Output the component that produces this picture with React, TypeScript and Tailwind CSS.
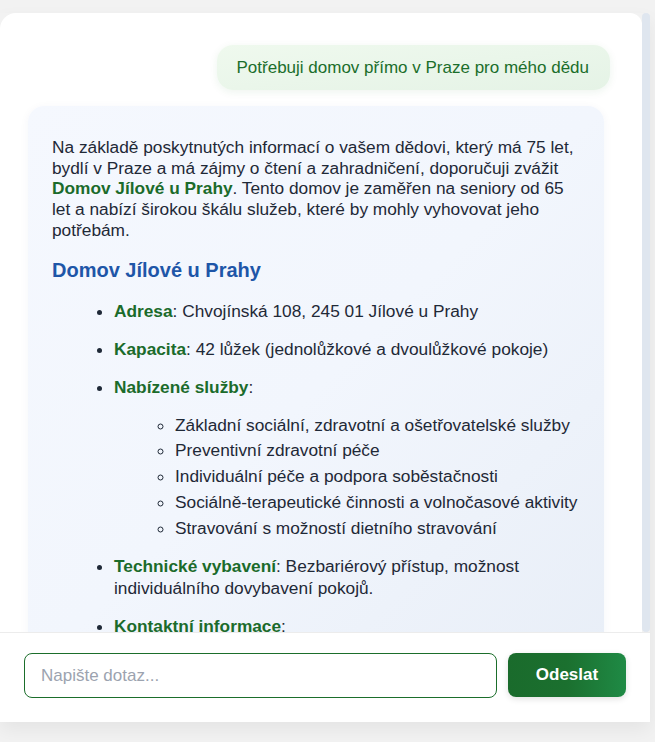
import React from 'react';

const services = [
  'Základní sociální, zdravotní a ošetřovatelské služby',
  'Preventivní zdravotní péče',
  'Individuální péče a podpora soběstačnosti',
  'Sociálně-terapeutické činnosti a volnočasové aktivity',
  'Stravování s možností dietního stravování',
];

const Label: React.FC<{ children: React.ReactNode }> = ({ children }) => (
  <strong className="font-bold text-[#1b6b2b]">{children}</strong>
);

export default function App() {
  return (
    <div
      className="min-h-screen bg-[#f2f2f2] pt-[13px] text-[17px] text-[#1f2937]"
      style={{ fontFamily: '"Liberation Sans", Arial, sans-serif' }}
    >
      <div className="flex w-[650px] flex-col shadow-[0_8px_18px_rgba(0,0,0,0.06)]">
        {/* Messages */}
        <div className="flex h-[619px]">
          <div className="flex flex-1 flex-col gap-4 overflow-hidden rounded-tl-2xl rounded-tr-xl bg-white pt-8 pl-[28px] pr-[32px]">
            <div className="flex justify-end">
              <div className="rounded-2xl bg-gradient-to-br from-[#eff9ee] to-[#e5f3e6] py-3 pl-5 pr-[21px] leading-[21px] text-[#1b6e2b] shadow-[0_2px_8px_rgba(27,110,43,0.08)]">
                Potřebuji domov přímo v Praze pro mého dědu
              </div>
            </div>

            <div className="w-[576px] shrink-0 rounded-2xl bg-gradient-to-br from-[#f5f8fe] via-[#f2f6fd] to-[#e8eef7] pt-[31px] pb-6 pl-6 pr-[22px] text-[17.3px] leading-[20.7px] shadow-[0_2px_10px_rgba(30,60,120,0.05)]">
              <p>
                Na základě poskytnutých informací o vašem dědovi, který má 75 let, bydlí v Praze a má zájmy o čtení a zahradničení, doporučuji zvážit{' '}
                <Label>Domov Jílové u Prahy</Label>. Tento domov je zaměřen na seniory od 65 let a nabízí širokou škálu služeb, které by mohly vyhovovat jeho potřebám.
              </p>

              <h3 className="mt-[17.5px] text-[20px] leading-6 font-bold text-[#1e56a8]">Domov Jílové u Prahy</h3>

              <ul className="mt-[17.5px] list-disc pl-[62px] leading-[22px] marker:text-[#1f2937]">
                <li className="mb-4">
                  <Label>Adresa</Label>: Chvojínská 108, 245 01 Jílové u Prahy
                </li>
                <li className="mb-4">
                  <Label>Kapacita</Label>: 42 lůžek (jednolůžkové a dvoulůžkové pokoje)
                </li>
                <li className="mb-4">
                  <Label>Nabízené služby</Label>:
                  <ul className="mt-4 list-[circle] pl-[61px]">
                    {services.map((s) => (
                      <li key={s} className="mb-[3.75px]">
                        {s}
                      </li>
                    ))}
                  </ul>
                </li>
                <li className="mb-4">
                  <Label>Technické vybavení</Label>: Bezbariérový přístup, možnost individuálního dovybavení pokojů.
                </li>
                <li className="mb-4">
                  <Label>Kontaktní informace</Label>:
                </li>
              </ul>
            </div>
          </div>
          <div className="w-2 rounded-full bg-[#dfe6ef]" />
        </div>

        {/* Input */}
        <div className="flex gap-[11px] border-t border-[#ececec] bg-white px-6 pt-5 pb-6">
          <input
            className="h-[45px] flex-1 rounded-lg border border-[#1b6e2b] px-4 text-[17px] text-[#1f2937] outline-none placeholder:text-[#9ca3af]"
            placeholder="Napište dotaz..."
          />
          <button className="h-[44px] w-[118px] rounded-lg bg-gradient-to-r from-[#1a6b2c] via-[#1b702f] to-[#1f8a45] text-[17px] font-bold text-white shadow-[0_2px_6px_rgba(0,0,0,0.12)]">
            Odeslat
          </button>
        </div>
      </div>
    </div>
  );
}
